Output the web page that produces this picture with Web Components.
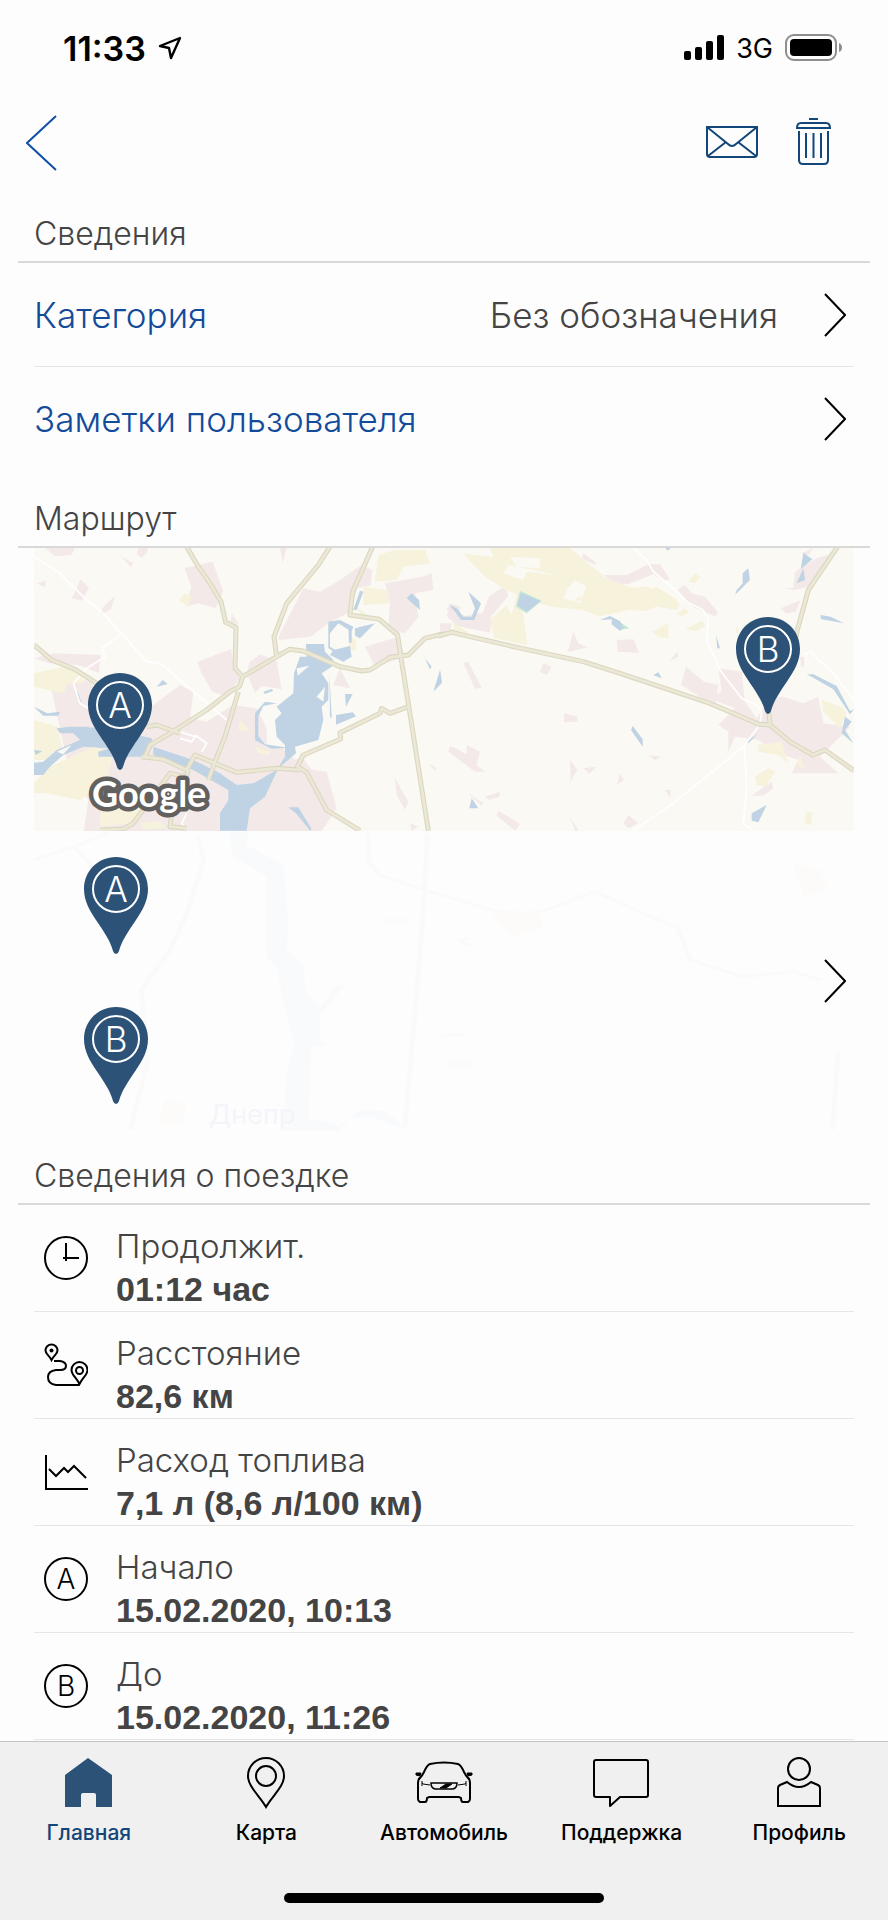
<!DOCTYPE html>
<html lang="ru">
<head>
<meta charset="utf-8">
<meta name="viewport" content="width=device-width, initial-scale=1">
<title>Поездка</title>
<style>
  body {
    margin: 0;
    background: #fdfdfd;
    color: #444;
    font-family: Inter, "Liberation Sans", sans-serif;
    --blue: #134b9b;
    --navy: #2d5278;
    --line: #d9d9d9;
    --hairline: #e6e6e6;
  }
</style>
</head>
<body>
<trip-page></trip-page>

<script>
/** Attach an open shadow root and fill it with markup */
function render(element, html) {
  const template = document.createElement("template");
  template.innerHTML = html;
  element.attachShadow({ mode: "open" });
  element.shadowRoot.appendChild(template.content.cloneNode(true));
}

class StatusBar extends HTMLElement {
  constructor() {
    super();
    render(this, `
      <style>
        :host {
          display: flex;
          align-items: center;
          justify-content: space-between;
          height: 64px;
          padding: 16px 46px 8px 63px;
          color: #000;
        }
        div { display: flex; align-items: center; gap: 12px; }
        .time { font-size: 34px; font-weight: 600; }
        .net { font-size: 27px; }
        svg { display: block; }
      </style>
      <div>
        <span class="time">11:33</span>
        <svg width="24" height="24" viewBox="0 0 24 24" fill="none" stroke="#000" stroke-width="2.4" stroke-linejoin="round">
          <path d="M22 2 2 10l9 2 2 10z"/>
        </svg>
      </div>
      <div>
        <svg width="40" height="26" viewBox="0 0 40 26">
          <rect x="0" y="16" width="7" height="9" rx="2"/>
          <rect x="11" y="12" width="7" height="13" rx="2"/>
          <rect x="22" y="6" width="7" height="19" rx="2"/>
          <rect x="33" y="0" width="7" height="25" rx="2"/>
        </svg>
        <span class="net">3G</span>
        <svg width="57" height="28" viewBox="0 0 57 28">
          <rect x="1" y="1" width="50" height="25" rx="8" fill="none" stroke="#8e8e8e" stroke-width="2"/>
          <rect x="5" y="5" width="42" height="17" rx="4"/>
          <path d="M54 9q3 1 3 4.500t-3 4.500z" fill="#8e8e8e"/>
        </svg>
      </div>
    `);
  }
}
customElements.define("status-bar", StatusBar);

class TripToolbar extends HTMLElement {
  constructor() {
    super();
    render(this, `
      <style>
        :host {
          display: flex;
          align-items: center;
          height: 110px;
          padding: 0 57px 0 26px;
        }
        button { border: 0; padding: 0; background: none; cursor: pointer; }
        svg { display: block; fill: none; }
        .back { margin-right: auto; }
        .mail { margin-right: 38px; }
        .mail, .delete { padding-bottom: 4px; }
      </style>
      <button class="back" aria-label="Назад">
        <svg width="31" height="56" viewBox="0 0 31 56" stroke="#0f4fa8" stroke-width="2">
          <path d="M30 1 1 28l29 27"/>
        </svg>
      </button>
      <button class="mail" aria-label="Отправить">
        <svg width="52" height="33" viewBox="0 0 52 33" stroke="#134679" stroke-width="2">
          <path d="M1 2h50v27q0 3-3 3H4q-3 0-3-3zM1 2l21 17q4 4 8 0L51 2M2 31l18-14M50 31 32 17"/>
        </svg>
      </button>
      <button class="delete" aria-label="Удалить">
        <svg width="35" height="48" viewBox="0 0 35 48" stroke="#134679" stroke-width="2">
          <path d="M13 2h9M5 6h25q4 0 4 5H1q0-5 4-5zM3 14v29q0 4 4 4h21q4 0 4-4V14M10 16v25M17.500 16v25M25 16v25"/>
        </svg>
      </button>
    `);
  }
}
customElements.define("trip-toolbar", TripToolbar);

class SectionHeading extends HTMLElement {
  constructor() {
    super();
    render(this, `
      <style>
        :host { display: block; margin: 0 18px; border-bottom: 2px solid var(--line); }
        h2 {
          margin: 0;
          padding: 0 16px 6px;
          font-size: 32px;
          line-height: 42px;
          font-weight: 300;
        }
      </style>
      <h2><slot></slot></h2>
    `);
  }
}
customElements.define("section-heading", SectionHeading);

class ChevronIcon extends HTMLElement {
  constructor() {
    super();
    render(this, `
      <style>
        :host { display: block; }
        svg { display: block; fill: none; stroke: #000; stroke-width: 2; }
      </style>
      <svg width="22" height="44" viewBox="0 0 22 44"><path d="M1 1l20 21L1 43"/></svg>
    `);
  }
}
customElements.define("chevron-icon", ChevronIcon);

class LinkRow extends HTMLElement {
  constructor() {
    super();
    render(this, `
      <style>
        :host { display: block; margin: 0 34px; }
        :host([divided]) { border-bottom: 1px solid var(--hairline); }
        button {
          display: flex;
          align-items: center;
          width: 100%;
          height: 103px;
          padding: 0 8px 0 0;
          border: 0;
          background: none;
          color: var(--blue);
          font: inherit;
          font-size: 35px;
          font-weight: 300;
          text-align: left;
          cursor: pointer;
        }
        .value { margin-left: auto; margin-right: 46px; color: #444; }
      </style>
      <button>
        <span><slot></slot></span>
        <span class="value"><slot name="value"></slot></span>
        <chevron-icon></chevron-icon>
      </button>
    `);
  }
}
customElements.define("link-row", LinkRow);

class MapPin extends HTMLElement {
  constructor() {
    super();
    render(this, `
      <style>
        :host { display: block; width: 64px; }
        svg { display: block; }
        path { fill: var(--navy); }
        text { font-size: 35px; font-weight: 300; fill: #fff; text-anchor: middle; }
      </style>
      <svg width="64" height="97" viewBox="0 0 64 97">
        <path d="M32 0C14 0 0 14 0 32c0 12 6 22 12 31 8 12 14 20 17 31q1 3 3 3t3-3c3-11 9-19 17-31 6-9 12-19 12-31C64 14 50 0 32 0z"/>
        <circle cx="32" cy="32" r="23" fill="none" stroke="#fff" stroke-width="2"/>
        <text x="32" y="45"></text>
      </svg>
    `);
  }

  connectedCallback() {
    this.shadowRoot.querySelector("text").textContent = this.getAttribute("label");
  }
}
customElements.define("map-pin", MapPin);

class RouteMap extends HTMLElement {
  constructor() {
    super();
    render(this, `
      <style>
        :host { display: block; position: relative; margin: 0 34px; }
        svg { display: block; width: 100%; }
        .town { fill: #f4e9e9; }
        .field { fill: #f7f2dc; }
        .water { fill: #bfd3e4; }
        .minor { fill: none; stroke: #fff; stroke-width: 5; }
        .case { fill: none; stroke: #dcd8c0; stroke-width: 15; stroke-linejoin: round; }
        .road { fill: none; stroke: #ebe8d8; stroke-width: 8; stroke-linejoin: round; }
        .logo {
          font: 700 36px "Lato", sans-serif;
          fill: #fff;
          stroke: #636060;
          stroke-width: 9;
          stroke-linejoin: round;
          paint-order: stroke;
        }
        /* the tip of each pin stands on its point of the map */
        map-pin { position: absolute; transform: translate(-50%, -100%); }
        .start { left: 10.500%; top: 78.500%; }
        .end { left: 89.500%; top: 58.500%; }
      </style>
      <svg viewBox="34 548 820 283" role="img" aria-label="Карта маршрута">
        <defs>
          <g id="roads-west">
            <path d="M42 315 95 360 165 388 230 430"/>
            <path d="M500 20 535 80 570 130 603 185 617 247 648 262 645 385 668 410 658 440 630 455 560 510 450 580 390 615 375 650"/>
            <path d="M930 20 895 75 800 190 762 290 770 350"/>
            <path d="M1058 20 998 155 990 225 1078 238 1133 285 1142 348 1165 490 1225 872"/>
            <path d="M668 410 770 350 808 328 850 333 960 380 1025 393 1050 390 1110 352 1165 345 1215 295 1290 276 1320 278"/>
            <path d="M1165 500 1110 520 1085 505 1080 520 960 578 962 597 850 645 832 680 860 697 920 810 1020 872"/>
            <path d="M365 650 430 658 500 690 525 645 650 697 770 685 840 690"/>
            <path d="M655 455 615 590 585 665 565 720"/>
            <path d="M380 560 410 555 480 580M505 690 500 710 450 700 340 850 310 867 240 870M455 820 450 860 500 865"/>
          </g>
          <g id="roads-east">
            <path d="M-5 288 35 277 230 322 430 365 540 400 810 490 955 552 990 555 1050 605 1118 645 1155 630 1242 692"/>
            <path d="M1193 20 1105 150 1072 270 1060 330M985 500 990 555"/>
          </g>
        </defs>
        <rect x="34" y="548" width="820" height="283" fill="#faf9f4"/>

        <g transform="translate(20 540) scale(.333333)">
          <path class="town" d="M75 24h90l-10 20-50 5zM305 50l35 20-8 12zM355 24h30l-5 15-15 15-15-12zM182 118l25 25-20 38-32-5zM284 168l-10 38-30 18 3-20zM50 130l28-8-3 20zM493 85l85-20 32 90-23 50-50-15-40 10 17-60zM635 220l22 32-25-5zM780 24h20l-12 45zM533 365l100-38 10 60 25 20-50 60-40-10-35-60zM690 365l30-22 50 20 15 85-60-10-20 20-25-60zM775 290l75-145 50 10 60-35 65-45 32 15-5 45-40 10-20 70-60 30-60 45-95 10zM1095 130l110-20 30-10 5 50-55 10 10 70-40 50-50-10 5-80zM42 355l60-15 140 5-5 55-60-25-90-5zM90 430l120-10 40 75 150 0 80-60 40 20-10 80 50 10 80-50 70 10 30 60 0 50 50 10 60 60 70 10 30 110-65 100-60 45-130-50-180-20-100 90-240 10 30-200-60-100zM510 720l110 15-10 138-120 0zM735 700l110-50 100 130-70 40-60-120-55 30-15 143-60-5zM1035 320l100-30 20 60-90 30zM1290 190l30 10v30l-40-20zM1295 620l25 10v25l-20-10zM1125 715l40 70-10 25-25-45zM1225 670l25 15-5 8zM1170 850l25 10-20 12zM960 385l30 60-50-10z"/>
          <path class="field" d="M475 180l20-20 20 10-10 30zM42 400l90-20 50 20 10 30-50 0-10 30-90-20zM42 540l70 20 15 60-50 40-35 0zM90 680l130-60 60 20-20 80-80 60-100-20-38 0 0-30zM240 790l80-10 70 10-60 60-90 10zM360 848l60-5 20 20-70 5zM1075 45l50-15 90 0 15 40-80 10-20 40-65 5zM1030 140l70 10 10 40-80 5zM990 285l20 20-5 30-20-10zM1010 200l25 20-10 10zM660 540l30 35-35-5zM705 620l45 15 0 10-35-5z"/>
          <path class="water" d="M42 668l28-3 40-35 70-30-20-20 30-15 60-5 145 35 5 20-20 35-145 0 0-15 35-10-80-5-60 25-40 35-20 25-30 0zM400 620l120 40 80 40 50 35 50-5 70-40 25-40 0-35-25-25-5-50 20-20-15-20 50-40 2-60 18-50 20 0-2-38 54 0 3 23 25 25-5 20-30 20 20 30 0 50-20 20 5 40-15 60-70 20 3 20-53 45-40 85-45 35-10 67-80 0 0-52 25-40 0-30-105-60-120-45z"/>
          <path class="water" d="M42 630l25 3-20 12zM42 500l40 20 38-5-5 12-45 0zM110 565l40-5 60 0-30 20-60 0zM410 440l18-20 15 12-20 5zM165 450l10 10 10 30-10-10zM940 330l50-12 5 32-25 15-40-20zM1005 265l60-15-45 45-15-8zM925 245l35-5 40 20-5 15-40-25-25 30 0 40 25 15-5 5-25-15zM985 260l10-2 0 50-8 0zM1020 152l10 3-20 55-10 0zM1160 175l15-15 22 20 3 30zM1290 195l30 30-25-20zM1215 355l20 25-5 8zM1260 390l5 40-25 25zM975 462l23 0-20 38zM948 525l50-8 10 12-60 25zM730 455l25-8 5 5-25 10zM928 400l7 130-5 5zM705 520l30-35 35 5-40 8-15 30 0 60 20 25 70 10-50 3-50-25zM805 802l30 0 40 65-5 5-40-50z"/>
          <path fill="#faf9f4" d="M110 635l45-20-25 28zM890 470l25-30-5 45zM830 385l38-8-35 30z"/>
          <path class="minor" d="M42 50 120 100 200 180 250 220 380 365 420 370 480 420 620 540M300 285 245 325 255 350 200 385 160 430 180 490 230 520M480 575 525 590 515 605 480 595M525 585 560 610 545 635M500 820 485 850 500 870"/>
          <use class="case" href="#roads-west"/>
          <use class="road" href="#roads-west"/>
        </g>

        <g transform="translate(440 540) scale(.333333)">
          <path class="town" d="M430 40l40 30-5 5-40-20zM490 105l70 0 65-32 35 0 30 45-20 5-30-20-75 30-45-2zM735 135l20 25 40 10 38 45-5 15-70-30-45-50zM195 138l10 30-50 60-5 50-100-20-30-30 8-20 50 20 50-10 20-50zM0 250l35 0-5 25-30 0zM400 275l15 35 28 12-60 15zM530 300l50-2 18 40-65-3zM690 362l22-28 3 18zM310 370l25 10-15 25-20-10zM70 370l15-5 40 78-20 3zM738 380l55 45 42 10-10 60-40-20-62-40zM372 520l40 10 0 15-40 2zM835 385l70 10 10 90 35 50 40-60 40-5 60 20 45-20 15 80 80 10-30 30-60 60 55 50-140 0 20-40-60-20-60-40-70-10-20 45 0-60-30-20 50-50-80-30 40-20zM30 618l50 25 0-28 40 20-10 40 25 20-30 0-80-60zM390 660l22 30-20 35zM430 685l38-5-20 22zM530 735l10-35 12 20zM625 645l38 5-18 10zM675 750l18 0-2 25zM85 760l45 30-5 8zM135 770l45-15-2 15-30 10zM175 812l65 40-15 20-55-45zM390 830l25 40-8 5zM550 850l15-25 30 25-30 15zM935 767l60-42 5 20-30 22zM1085 40l35-15-15 20zM1130 55l50-15-70 100-50 10-30-5 30 0 5-50zM1022 205l60-25-15 35-30 5zM1080 350l12 0 0 30-8 0z"/>
          <path class="field" d="M150 24l240 0 35 30 50 40 20 20 80 30 50-5 50 50-60 25-45-5-90 20-50-18-90-10-60-15-90-40-60-40-60-65 90 10zM150 240l50-45 15 30 20-80 15 80 12 90-100-20zM620 150l30-10 60 40 5 20-70-10zM655 180l65 10-10 20-60-10zM635 275l50-25 0 45-30-5zM708 220l25-15 15 10-25 15zM735 268l50-25 12 15-30 15zM745 125l20-25 15 10-15 20zM40 250l50 30-48 0zM955 615l70-10 20 65-30-25-60-10zM945 710l40-25 20 10-30 45-25-5zM1145 480l60 20 15 20-20 45-50-50zM1078 640l15 45-20-5zM1100 815l18 5-5 35-20-5zM885 265l10-5 0 30z"/>
          <path fill="#faf9f4" d="M205 75l100 20 40 10-85-10-10 25-60-20zM380 150l25-30 35 20-20 50-50-15zM210 50l90 5 0 30-70-5z"/>
          <path class="field" d="M400 185l20-18 7 13z"/>
          <path fill="#c5e8d5" d="M240 152l65 30-45 38-32-20zM530 240l38 25-30 5z"/>
          <path class="water" d="M242 158l60 25-42 33-28-20zM30 195l20 10 20 25 25 0 10-25-20-50 38 35-20 50-40 0zM480 240l30-12 30 15 10 20-10 10-25-20 0-15zM675 24l18 0-10 8zM925 85l5 35-45 45 5-15 18-20 0-30zM1090 38l27 20-35 30zM1090 85l5 35-25 10zM1142 225l30 5 40 20-70-13zM828 285l12 40-8 0zM640 405l15-8 10 18zM578 558l30 40 0 22-35-50zM0 390l6 35-6 5zM1100 403l20 0 70 35 40 75 12-5-12 15-50-75-60-35zM1215 530l20 15-20 25 25 40-35-30zM920 605l35-25-30 30zM95 775l20 30-27 0zM935 820l45-25-25 52-20-5z"/>
          <path class="minor" d="M575 20 620 60 640 95 700 145 740 185 790 210 805 240 800 300 840 390 905 475 950 495 965 515 960 550M1090 345 1110 335 1180 400 1242 480M955 560 910 620 700 790 580 872M913 620 920 740 910 850 935 870"/>
          <use class="case" href="#roads-east"/>
          <use class="road" href="#roads-east"/>
        </g>
        <text class="logo" x="92" y="807">Google</text>
      </svg>
      <map-pin class="start" label="A"></map-pin>
      <map-pin class="end" label="B"></map-pin>
    `);
  }
}
customElements.define("route-map", RouteMap);

class RouteStops extends HTMLElement {
  constructor() {
    super();
    render(this, `
      <style>
        :host { display: block; margin: 0 34px; }
        button {
          display: grid;
          width: 100%;
          padding: 0;
          border: 0;
          background: none;
          font: inherit;
          cursor: pointer;
        }
        /* the pale map and the stops share one cell */
        .ghost, .stops { grid-area: 1 / 1; }
        .ghost { width: 100%; height: 300px; }
        .stops { display: flex; align-items: center; justify-content: space-between; padding: 0 8px 0 50px; }
        map-pin { padding: 26px 0 27px; }
      </style>
      <button aria-label="Остановки маршрута">
        <svg class="ghost" viewBox="34 831 820 300" preserveAspectRatio="xMidYMid slice" aria-hidden="true">
          <g transform="translate(0 830) scale(.566327 .333333)" fill="none">
            <g stroke="#fbfafa" stroke-width="9">
              <path d="M60 90 130 50 190 10M130 50 170 120M350 20 360 90 330 250 300 360 250 480 260 700 230 900M650 10 650 90 670 135 750 180 880 245 950 250 1050 185 1170 275 1195 290 1220 390 1310 440 1400 425 1450 450M755 10 745 300 730 600 715 890M1480 660 1470 900"/>
            </g>
            <path fill="#fdfafa" d="M870 250l80-10 10 50-60 30zM1400 100l50 20 10 60-40 20zM290 810l40 10-10 60-40 10zM780 610h40v10h-40zM790 690h40v25h-40zM680 265h40v20h-40z"/>
            <path fill="#f8fafc" d="M405 4h35l-5 40 65 60 10 200-5 50 30 50 5 80 25 50 30-70 15 0-45 90 0 70 10 25-25 0-5 220 20 0 35 20 35-50 45 5 40 50-25-5-40-30-35 5-30 55-60-10-30 0 5-170 15-100-20-120-10-100-20-40 0-240-60-60zM810 325l20 0-10 10 15 12-20 0z"/>
          </g>
          <text x="209" y="1124" font-size="27" fill="#f3f5fa">Днепр</text>
        </svg>
        <span class="stops">
          <span>
            <map-pin label="A"></map-pin>
            <map-pin label="B"></map-pin>
          </span>
          <chevron-icon></chevron-icon>
        </span>
      </button>
    `);
  }
}
customElements.define("route-stops", RouteStops);

class TripFact extends HTMLElement {
  constructor() {
    super();
    render(this, `
      <style>
        :host {
          display: flex;
          align-items: center;
          margin: 0 34px;
          padding: 0 0 0 10px;
          border-bottom: 1px solid var(--hairline);
        }
        dl { margin: 0 0 0 28px; padding: 20px 0 0; line-height: 43px; }
        dt { font-size: 33px; font-weight: 300; }
        dd { margin: 0; font: 700 34px/43px "Liberation Sans", sans-serif; }
      </style>
      <slot name="icon"></slot>
      <dl>
        <dt><slot></slot></dt>
        <dd><slot name="value"></slot></dd>
      </dl>
    `);
  }
}
customElements.define("trip-fact", TripFact);

class TabItem extends HTMLElement {
  constructor() {
    super();
    render(this, `
      <style>
        :host { display: block; flex: 1; color: #000; }
        :host([current]) { color: #134679; }
        a {
          display: flex;
          flex-direction: column;
          align-items: center;
          gap: 10px;
          color: inherit;
          font-size: 21px;
          line-height: 28px;
          font-weight: 500;
          text-decoration: none;
        }
      </style>
      <a href="#"><slot name="icon"></slot><span><slot></slot></span></a>
    `);
  }
}
customElements.define("tab-item", TabItem);

class TabBar extends HTMLElement {
  constructor() {
    super();
    render(this, `
      <style>
        :host {
          display: block;
          padding: 15px 0 17px;
          border-top: 1px solid #c4c4c4;
          background: #f0f0f0;
        }
        nav { display: flex; }
        .home { width: 36%; height: 10px; margin: 46px auto 0; border-radius: 5px; background: #000; }
      </style>
      <nav><slot></slot></nav>
      <div class="home"></div>
    `);
  }
}
customElements.define("tab-bar", TabBar);

class TripPage extends HTMLElement {
  constructor() {
    super();
    render(this, `
      <style>
        :host { display: flex; flex-direction: column; min-height: 100vh; }
        main { flex: 1; padding-top: 15px; }
        .next { margin-top: 28px; }
        .last { margin-top: 24px; }
        svg { display: block; fill: none; stroke: #000; stroke-width: 2; }
        svg text { font-size: 28px; font-weight: 300; fill: #000; stroke: none; text-anchor: middle; }
      </style>
      <status-bar></status-bar>
      <trip-toolbar></trip-toolbar>
      <main>
        <section-heading>Сведения</section-heading>
        <link-row divided>Категория<span slot="value">Без обозначения</span></link-row>
        <link-row>Заметки пользователя</link-row>

        <section-heading class="next">Маршрут</section-heading>
        <route-map></route-map>
        <route-stops></route-stops>

        <section-heading class="last">Сведения о поездке</section-heading>
        <trip-fact>
          <svg slot="icon" width="44" height="44" viewBox="0 0 44 44">
            <circle cx="22" cy="22" r="21"/>
            <path d="M22 7v18M19 22h16"/>
          </svg>
          Продолжит.<span slot="value">01:12 час</span>
        </trip-fact>
        <trip-fact>
          <svg slot="icon" width="44" height="44" viewBox="0 0 44 44">
            <path d="M7.500 17C5 12 1.500 11 1.500 7.500a6 6 0 0 1 12 0C13.500 11 10 12 7.500 17z"/>
            <circle cx="7.500" cy="7.500" r="2" fill="#000" stroke="none"/>
            <path d="M10 18h6q6 1 6 5t-6 4h-4q-8 1-8 7 0 7 8 8h23"/>
            <path d="M35.500 41C32 34 27.500 32 27.500 27a8 8 0 0 1 16 0c0 5-4.500 7-8 14z"/>
            <circle cx="35.500" cy="27.500" r="3.500"/>
          </svg>
          Расстояние<span slot="value">82,6 км</span>
        </trip-fact>
        <trip-fact>
          <svg slot="icon" width="44" height="44" viewBox="0 0 44 44">
            <path d="M2 5v34h42"/>
            <path d="M5 19l7 7 8-8 4 4 6-6 12 12"/>
          </svg>
          Расход топлива<span slot="value">7,1 л (8,6 л/100 км)</span>
        </trip-fact>
        <trip-fact>
          <svg slot="icon" width="44" height="44" viewBox="0 0 44 44">
            <circle cx="22" cy="22" r="21"/>
            <text x="22" y="32">A</text>
          </svg>
          Начало<span slot="value">15.02.2020, 10:13</span>
        </trip-fact>
        <trip-fact>
          <svg slot="icon" width="44" height="44" viewBox="0 0 44 44">
            <circle cx="22" cy="22" r="21"/>
            <text x="22" y="32">B</text>
          </svg>
          До<span slot="value">15.02.2020, 11:26</span>
        </trip-fact>
      </main>

      <tab-bar>
        <tab-item current>
          <svg slot="icon" width="60" height="52" viewBox="0 0 60 52">
            <path d="M29 1 53 18v32H37V38q0-2-2-2H24q-2 0-2 2v12H6V18z" fill="#2d5278" stroke="none"/>
          </svg>
          Главная
        </tab-item>
        <tab-item>
          <svg slot="icon" width="60" height="52" viewBox="0 0 60 52">
            <path d="M30 50C24 39 12 30 12 19a18 18 0 0 1 36 0c0 11-12 20-18 31z"/>
            <circle cx="30" cy="19" r="10"/>
          </svg>
          Карта
        </tab-item>
        <tab-item>
          <svg slot="icon" width="60" height="52" viewBox="0 0 60 52">
            <path d="M6 21q2-2 4-6 3-7 6-8 14-3 28 0 3 1 6 8 2 4 4 6 2 1 2 5v16q0 2-2 3h-5q-2 0-2-4l-2-1H15l-2 1q0 4-2 4H6q-2-1-2-3V26q0-4 2-5z"/>
            <path d="M8 26l1 1 7 1M8 24v5M52 26l-1 1-7 1M52 24v5" stroke-width="1"/>
            <path d="M17 26h26q0 5-4 6H21q-4-1-4-6z" stroke-width="1.500"/>
            <path d="M26 31l6-4h6l-6 4zM2 16l5 0-1 3-4-1zM58 16l-5 0 1 3 4-1z" fill="#000" stroke-width="1"/>
          </svg>
          Автомобиль
        </tab-item>
        <tab-item>
          <svg slot="icon" width="60" height="52" viewBox="0 0 60 52">
            <path d="M4 3h50q2 0 2 2v33q0 2-2 2H28l-10 9V40H4q-2 0-2-2V5q0-2 2-2z" stroke-linejoin="round"/>
          </svg>
          Поддержка
        </tab-item>
        <tab-item>
          <svg slot="icon" width="60" height="52" viewBox="0 0 60 52">
            <circle cx="30" cy="12" r="11"/>
            <path d="M9 49V31q0-2 2-3l7-3q12 10 24 0l7 3q2 1 2 3v18z"/>
          </svg>
          Профиль
        </tab-item>
      </tab-bar>
    `);
  }
}
customElements.define("trip-page", TripPage);
</script>
</body>
</html>
